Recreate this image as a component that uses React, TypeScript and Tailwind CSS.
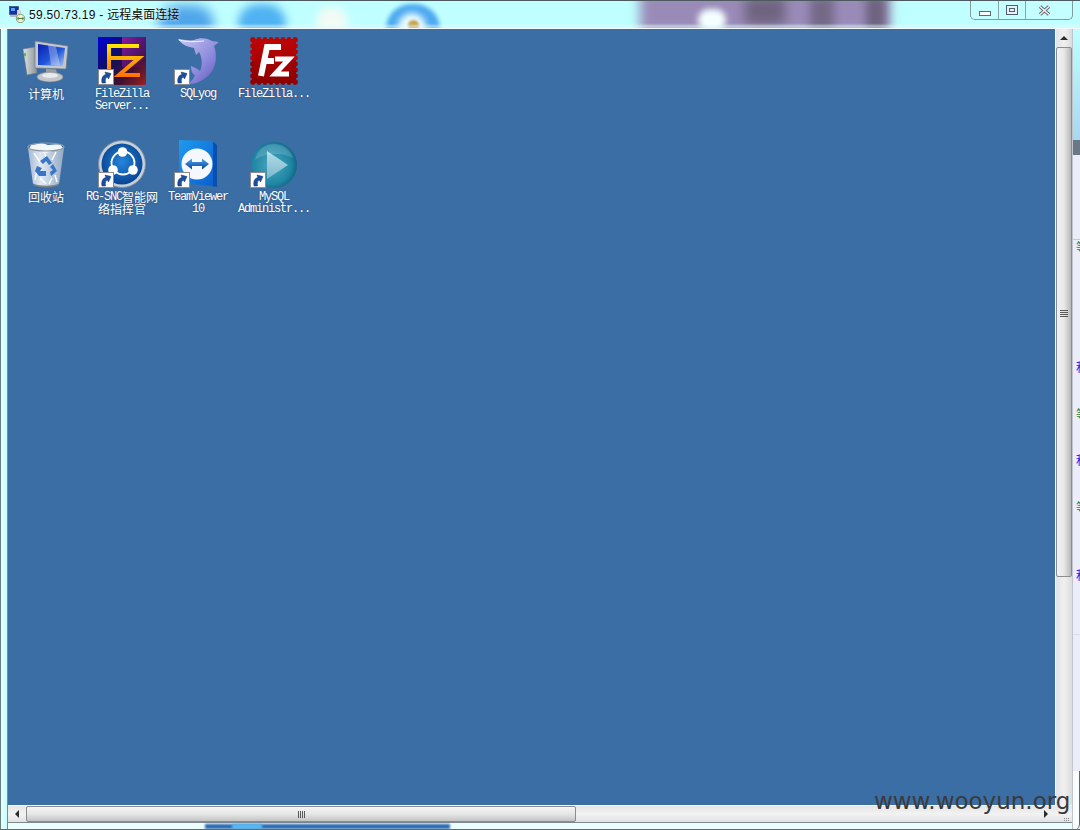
import React from "react";

const Shortcut = () => (
  <span className="absolute left-0 bottom-0 w-4 h-4 bg-white border border-[#8c8c8c] flex items-center justify-center">
    <svg width="14" height="14" viewBox="0 0 14 14">
      <path d="M3 13 C2 8 4 5 7 4.5 L6 2 L12 3.5 L9.5 9 L8.3 7 C6.5 7.5 6 10 6.5 13 Z" fill="#1d4f9e" stroke="#12306a" strokeWidth="0.5" />
    </svg>
  </span>
);

const ComputerIcon = () => (
  <svg width="48" height="48" viewBox="0 0 48 48">
    <defs>
      <linearGradient id="scr" x1="0" y1="0" x2="1" y2="1">
        <stop offset="0" stopColor="#0a1fb0" />
        <stop offset="0.55" stopColor="#1f55d8" />
        <stop offset="1" stopColor="#a9c6f5" />
      </linearGradient>
      <linearGradient id="twr" x1="0" y1="0" x2="1" y2="0">
        <stop offset="0" stopColor="#dfe3e5" />
        <stop offset="1" stopColor="#8b9296" />
      </linearGradient>
    </defs>
    <path d="M1 12 L13 10 L15 36 L5 38 Z" fill="url(#twr)" stroke="#70777c" strokeWidth="0.5" />
    <rect x="2" y="16" width="2" height="3" fill="#55c050" />
    <path d="M13 4 L46 9 L44 32 L13 31 Z" fill="#c4c9cf" stroke="#6d7880" strokeWidth="0.7" />
    <path d="M16 7 L43 11 L41 29 L16 28 Z" fill="url(#scr)" />
    <path d="M26 8 L34 9.5 L38 28.5 L29 28 Z" fill="#ffffff" opacity="0.3" />
    <path d="M24 32 L34 32.5 L35 36 L24 36 Z" fill="#9aa2a8" />
    <ellipse cx="28" cy="40" rx="13" ry="5" fill="#c3c7cb" stroke="#7b8186" strokeWidth="0.6" />
    <ellipse cx="28" cy="38.5" rx="8" ry="2.5" fill="#e8eaec" />
  </svg>
);

const FzServerIcon = () => (
  <svg width="48" height="48" viewBox="0 0 48 48">
    <defs>
      <linearGradient id="fzb" x1="0" y1="0" x2="1" y2="1">
        <stop offset="0" stopColor="#0000e0" />
        <stop offset="0.4" stopColor="#101060" />
        <stop offset="0.7" stopColor="#401030" />
        <stop offset="1" stopColor="#a02020" />
      </linearGradient>
      <linearGradient id="fzp" x1="0" y1="0" x2="1" y2="1">
        <stop offset="0" stopColor="#9a1a9a" stopOpacity="0.95" />
        <stop offset="1" stopColor="#8a1a9a" stopOpacity="0" />
      </linearGradient>
      <linearGradient id="fzs" gradientUnits="userSpaceOnUse" x1="24" y1="7" x2="24" y2="42">
        <stop offset="0" stopColor="#ffea00" />
        <stop offset="0.5" stopColor="#ffa000" />
        <stop offset="1" stopColor="#ff6a00" />
      </linearGradient>
    </defs>
    <rect width="48" height="48" fill="url(#fzb)" />
    <rect x="24" width="24" height="30" fill="url(#fzp)" />
    <path d="M11 38 V9 H41 M11 21 H24 M24 21 H41 L21 38 H42" fill="none" stroke="url(#fzs)" strokeWidth="4" />
  </svg>
);

const Dolphin = () => (
  <svg width="48" height="48" viewBox="0 0 48 48">
    <defs>
      <linearGradient id="dol" x1="0" y1="0" x2="1" y2="1">
        <stop offset="0" stopColor="#c8c8f2" />
        <stop offset="0.6" stopColor="#8c88dc" />
        <stop offset="1" stopColor="#5a58b4" />
      </linearGradient>
    </defs>
    <path d="M4 2 C12 3 16 4 20 3 C26 0 34 1 38 4 L45 5 L40 9 C44 20 42 35 30 42 C26 45 20 47 15 47 C18 43 20 41 21 38 C18 37 17 33 17 29 C20 30 24 32 26 34 C29 28 28 20 25 15 L22 18 L20 11 C14 10 8 8 4 2 Z" fill="url(#dol)" />
    <path d="M5 3 C12 5 20 5 30 4" stroke="#eeeefc" strokeWidth="1.2" fill="none" />
  </svg>
);

const FzRed = () => {
  const s = [3, 9, 15, 21, 27, 33, 39, 45];
  return (
    <svg width="48" height="48" viewBox="0 0 48 48">
      <defs>
        <linearGradient id="red" x1="0" y1="0" x2="0" y2="1">
          <stop offset="0" stopColor="#bf0606" />
          <stop offset="1" stopColor="#8c0000" />
        </linearGradient>
      </defs>
      <rect x="2" y="2" width="44" height="44" fill="url(#red)" />
      {s.map((v) => (
        <g key={v} fill={v > 24 ? "#960000" : "#b80404"}>
          <circle cx={v} cy="2.5" r="2.4" fill="#bb0505" />
          <circle cx={v} cy="45.5" r="2.4" fill="#8c0000" />
          <circle cx="2.5" cy={v} r="2.4" />
          <circle cx="45.5" cy={v} r="2.4" />
        </g>
      ))}
      <path d="M11 39 L17 10 H31 M14 24 H24" fill="none" stroke="#fff" strokeWidth="6" />
      <path d="M25 22 H39 L25 37 H39" fill="none" stroke="#fff" strokeWidth="5" />
    </svg>
  );
};

const Bin = () => (
  <svg width="48" height="48" viewBox="0 0 48 48">
    <defs>
      <linearGradient id="bin" x1="0" y1="0" x2="1" y2="0">
        <stop offset="0" stopColor="#a4b8cf" />
        <stop offset="0.35" stopColor="#dfe9f4" />
        <stop offset="1" stopColor="#93a9c3" />
      </linearGradient>
    </defs>
    <path d="M6 8 L42 8 L37 44 C30 47 18 47 11 44 Z" fill="url(#bin)" />
    <path d="M9 5 L20 3 L26 5 L38 4 L41 8 L24 13 L7 9 Z" fill="#f4f7fa" />
    <ellipse cx="24" cy="7" rx="18" ry="4" fill="none" stroke="#8f9aa6" strokeWidth="1.2" />
    <path d="M12 13 L18 22 M34 12 L30 20 M15 30 L13 40 M33 35 L35 42 M22 12 L24 17 M18 38 L24 44 M30 38 L27 44" stroke="#ffffff" strokeWidth="1.4" />
    <path d="M18 21 L25 16 L30 23 L27 25 L24 21 L21 24 Z M31 24 L35 31 L29 36 L28 32 L31 30 L28 27 Z M15 26 L20 28 L18 31 L24 31 L24 36 L17 36 L13 31 Z" fill="#3a76c8" />
    <path d="M11 43.5 C18 46.5 30 46.5 37 43.5 L36.5 45.5 C29 48 19 48 11.5 45.5 Z" fill="#7c8186" />
  </svg>
);

const Snc = () => (
  <svg width="48" height="48" viewBox="0 0 48 48">
    <defs>
      <radialGradient id="snc" cx="0.5" cy="0.45" r="0.6">
        <stop offset="0" stopColor="#2486dc" />
        <stop offset="1" stopColor="#063e8c" />
      </radialGradient>
    </defs>
    <circle cx="24" cy="24" r="23.5" fill="#c6d0da" stroke="#7d8ea0" strokeWidth="1" />
    <circle cx="24" cy="24" r="20.5" fill="url(#snc)" />
    <circle cx="25" cy="23" r="11.5" fill="none" stroke="#fff" strokeWidth="1.8" />
    <circle cx="24.5" cy="12" r="4.8" fill="#fff" />
    <circle cx="15" cy="30" r="4.8" fill="#fff" />
    <circle cx="35" cy="30" r="4.8" fill="#fff" />
  </svg>
);

const TeamViewer = () => (
  <svg width="48" height="48" viewBox="0 0 48 48">
    <defs>
      <linearGradient id="tv" x1="0" y1="0" x2="1" y2="1">
        <stop offset="0" stopColor="#1d9bf0" />
        <stop offset="1" stopColor="#0a5fd0" />
      </linearGradient>
      <linearGradient id="tva" x1="0" y1="0" x2="0" y2="1">
        <stop offset="0" stopColor="#4aa8ee" />
        <stop offset="1" stopColor="#0b3f9a" />
      </linearGradient>
    </defs>
    <path d="M38 1 L43 5 L43 47 L38 46 Z" fill="#0b4fae" />
    <path d="M5 0 L39 1 L39 46 L5 43 Z" fill="url(#tv)" />
    <circle cx="23" cy="24" r="15.5" fill="#f4f8fc" />
    <path d="M11 24 L18 18.5 V22 H28 V18.5 L35 24 L28 29.5 V26 H18 V29.5 Z" fill="url(#tva)" />
  </svg>
);

const MySqlAdmin = () => (
  <svg width="48" height="48" viewBox="0 0 48 48">
    <defs>
      <radialGradient id="my" cx="0.45" cy="0.5" r="0.6">
        <stop offset="0" stopColor="#4aa8c0" />
        <stop offset="0.7" stopColor="#1f86a4" />
        <stop offset="1" stopColor="#0c5a78" />
      </radialGradient>
      <linearGradient id="pl" x1="0" y1="0" x2="0" y2="1">
        <stop offset="0" stopColor="#b4dce8" />
        <stop offset="1" stopColor="#7cb8cc" />
      </linearGradient>
    </defs>
    <circle cx="24" cy="25" r="23" fill="url(#my)" />
    <path d="M17 11 L38 25 L17 39 Z" fill="url(#pl)" />
    <path d="M5 20 C7 10 15 4 24 4 C33 4 40 9 43 18 C32 12 15 13 5 20 Z" fill="#ffffff" opacity="0.16" />
  </svg>
);

const MONO = "font-['Liberation_Mono','Noto_Sans_CJK_SC',monospace]";

type Item = { icon: React.ReactNode; lines: React.ReactNode[]; shortcut?: boolean };

const Cjk = ({ children }: { children: React.ReactNode }) => (
  <span className="inline-block h-[12px] align-top text-[12px] leading-[12px] tracking-normal font-['Noto_Sans_CJK_SC',sans-serif]">{children}</span>
);

const items: Item[] = [
  { icon: <ComputerIcon />, lines: [<Cjk>计算机</Cjk>] },
  { icon: <FzServerIcon />, lines: ["FileZilla", "Server..."], shortcut: true },
  { icon: <Dolphin />, lines: ["SQLyog"], shortcut: true },
  { icon: <FzRed />, lines: ["FileZilla..."] },
  { icon: <Bin />, lines: [<Cjk>回收站</Cjk>] },
  { icon: <Snc />, lines: [<>RG-SNC<Cjk>智能网</Cjk></>, <Cjk>络指挥官</Cjk>], shortcut: true },
  { icon: <TeamViewer />, lines: ["TeamViewer", "10"], shortcut: true },
  { icon: <MySqlAdmin />, lines: ["MySQL", "Administr..."], shortcut: true },
];

const clip: { top: string; text: string; color: string }[] = [
  { top: "top-[212px]", text: "等", color: "text-[#1f8a3a]" },
  { top: "top-[332px]", text: "积", color: "text-[#2a1fe0]" },
  { top: "top-[379px]", text: "等", color: "text-[#1f8a3a]" },
  { top: "top-[425px]", text: "积", color: "text-[#2a1fe0]" },
  { top: "top-[472px]", text: "等", color: "text-[#1f8a3a]" },
  { top: "top-[540px]", text: "积", color: "text-[#2a1fe0]" },
];

export default function App() {
  return (
    <div className="relative w-[1080px] h-[830px] overflow-hidden bg-[#ecffff] flex flex-col font-['Liberation_Sans','Noto_Sans_CJK_SC',sans-serif]">
      {/* title bar */}
      <div className="relative h-[29px] shrink-0 border-t border-[#4c5a60] bg-[#bfffff] border-b border-b-[#f4f8f8] overflow-hidden flex items-start">
        <div className="absolute left-[158px] top-[4px] w-[56px] h-[40px] rounded-full bg-[#4fa6ea] blur-[6px]" />
        <div className="absolute left-[238px] top-[3px] w-[48px] h-[40px] rounded-full bg-[#4fb2f2] blur-[5px]" />
        <div className="absolute left-[316px] top-[6px] w-[32px] h-[30px] rounded-full bg-[#f2fbf4] blur-[4px]" />
        <div className="absolute left-[386px] top-[3px] w-[54px] h-[50px] rounded-full bg-[#4caaf0] blur-[2px]" />
        <div className="absolute left-[398px] top-[12px] w-[28px] h-[34px] rounded-full bg-[#e8fbff] blur-[3px]" />
        <div className="absolute left-[408px] top-[19px] w-[11px] h-[11px] rounded-full bg-[#c9a14a] blur-[1px]" />
        <div className="absolute left-[640px] top-[-12px] w-[250px] h-[46px] bg-[#9a8ab8] blur-[6px]" />
        <div className="absolute left-[745px] top-[-4px] w-[40px] h-[28px] bg-[#5c5468] opacity-70 blur-[6px]" />
        <div className="absolute left-[810px] top-[-4px] w-[24px] h-[36px] bg-[#5c5468] opacity-60 blur-[5px]" />
        <div className="absolute left-[866px] top-[-4px] w-[20px] h-[36px] bg-[#5c5468] opacity-70 blur-[4px]" />
        <div className="absolute left-[698px] top-[8px] w-[28px] h-[22px] rounded-full bg-[#f4ffff] blur-[3px]" />
        <div className="absolute left-0 right-0 bottom-0 h-[3px] bg-[#dffcff] opacity-60 blur-[1px]" />

        <div className="relative flex items-center h-[27px] pl-[9px] gap-[3px]">
          <svg width="17" height="17" viewBox="0 0 17 17">
            <rect x="0.5" y="0.5" width="9" height="8" fill="#1030b0" stroke="#404a70" strokeWidth="0.7" />
            <rect x="2" y="2" width="4" height="3" fill="#60a0f0" />
            <rect x="8" y="4" width="4" height="5" fill="#d0d4e0" />
            <rect x="1" y="9" width="7" height="2" fill="#b4b8c8" />
            <circle cx="11.5" cy="12.5" r="4.2" fill="#eef0dc" stroke="#6f8a50" strokeWidth="0.8" />
            <path d="M9 12.5 H14 M9.5 11 L8.5 12.5 L9.5 14 M13.5 11 L14.5 12.5 L13.5 14" stroke="#3a7a2a" strokeWidth="0.9" fill="none" />
          </svg>
          <span className="text-[12px] leading-[16px] text-[#0c0c0c] [text-shadow:0_0_4px_#ffffff]">
            <span className="tracking-[0.3px]">59.50.73.19 - </span>远程桌面连接
          </span>
        </div>

        {/* caption buttons */}
        <div className="absolute left-[970px] top-0 w-[103px] h-[19px] rounded-b-[5px] border border-t-0 border-[#7f9d9d] flex bg-[#c4ffff]">
          <div className="w-[28px] h-full border-r border-[#8aa3a3] flex items-center justify-center">
            <span className="block w-[12px] h-[5px] mt-[6px] bg-white border border-[#5a6a78]" />
          </div>
          <div className="w-[27px] h-full border-r border-[#8aa3a3] flex items-center justify-center">
            <span className="w-[12px] h-[10px] bg-[#e8f2f6] border border-[#4f5f70] flex items-center justify-center">
              <span className="block w-[6px] h-[4px] border border-[#4f5f70]" />
            </span>
          </div>
          <div className="flex-1 flex items-center justify-center pr-[10px]">
            <svg width="13" height="11" viewBox="0 0 13 11">
              <path d="M2 1.5 L11 9.5 M11 1.5 L2 9.5" stroke="#5c6670" strokeWidth="3.4" />
              <path d="M2 1.5 L11 9.5 M11 1.5 L2 9.5" stroke="#f0f2f4" strokeWidth="1.6" />
            </svg>
          </div>
        </div>
      </div>

      {/* middle */}
      <div className="flex flex-1 min-h-0">
        <div className="w-[7px] shrink-0 border-l border-[#6a8080] bg-gradient-to-r from-[#e8ffff] to-[#c8ffff]" />
        <div className="w-[1065px] shrink-0 flex flex-col border-l border-[#7d8a90]">
          <div className="flex h-[776px] shrink-0">
            {/* desktop */}
            <div className="w-[1047px] shrink-0 bg-[#3a6ea5] border-t border-[#3a6ea5] pt-[7px]">
              <div className="grid grid-cols-[repeat(4,76px)] auto-rows-[103px]">
                {items.map((it, i) => (
                  <div key={i} className="flex flex-col items-center">
                    <div className="relative w-12 h-12">
                      {it.icon}
                      {it.shortcut && <Shortcut />}
                    </div>
                    <div className={`mt-[3px] w-[76px] text-center text-white text-[12px] tracking-[-1.2px] leading-[12px] ${MONO} [text-shadow:0_0_2px_#2a4a70]`}>
                      {it.lines.map((l, k) => (
                        <div key={k} className="whitespace-nowrap h-[12px]">{l}</div>
                      ))}
                    </div>
                  </div>
                ))}
              </div>
            </div>
            {/* v scrollbar */}
            <div className="w-[17px] shrink-0 border-l border-[#f4f6f8] bg-gradient-to-r from-[#e4e4e4] via-[#f0f0f0] to-[#dcdcdc] flex flex-col">
              <div className="h-[18px] shrink-0 flex items-center justify-center">
                <span className="block w-0 h-0 border-x-[4px] border-x-transparent border-b-[4px] border-b-[#2a2a2a]" />
              </div>
              <div className="h-[530px] shrink-0 rounded-[2px] border border-[#8c8c8c] bg-gradient-to-r from-[#f2f2f2] via-[#e8e8e8] to-[#b8b8b8] flex items-center justify-center">
                <span className="flex flex-col gap-[1px] w-[8px] mt-[2px]">
                  <span className="h-[1px] bg-[#5a5a5a]" />
                  <span className="h-[1px] bg-[#5a5a5a]" />
                  <span className="h-[1px] bg-[#5a5a5a]" />
                  <span className="h-[1px] bg-[#5a5a5a]" />
                </span>
              </div>
            </div>
          </div>
          {/* h scrollbar */}
          <div className="relative h-[18px] shrink-0 flex border-t border-[#f4f6f8] border-b border-b-[#7d8a90] bg-gradient-to-b from-[#e6e6e6] via-[#f2f2f2] to-[#e2e2e2]">
            <div className="w-[18px] shrink-0 flex items-center justify-center">
              <span className="block w-0 h-0 border-y-[4px] border-y-transparent border-r-[4px] border-r-[#2a2a2a]" />
            </div>
            <div className="w-[550px] shrink-0 rounded-[2px] border border-[#8c8c8c] bg-gradient-to-b from-[#f4f4f4] via-[#e6e6e6] to-[#c4c4c4] flex items-center justify-center">
              <span className="flex gap-[1px] h-[7px]">
                <span className="w-[1px] bg-[#5a5a5a]" />
                <span className="w-[1px] bg-[#5a5a5a]" />
                <span className="w-[1px] bg-[#5a5a5a]" />
                <span className="w-[1px] bg-[#5a5a5a]" />
              </span>
            </div>
            <div className="flex-1" />
            <div className="w-[17px] shrink-0 flex items-center justify-center mr-[18px]">
              <span className="block w-0 h-0 border-y-[4px] border-y-transparent border-l-[4px] border-l-[#2a2a2a]" />
            </div>
            <div className="absolute right-[3px] bottom-[1px] grid grid-cols-3 gap-[1px]">
              {[0, 1, 2, 3, 4, 5].map((n) => (
                <span key={n} className="block w-[1px] h-[1px] bg-[#8a8a8a]" />
              ))}
            </div>
          </div>
          {/* bottom frame */}
          <div className="relative flex-1" />
        </div>
        <div className="relative flex-1 overflow-hidden border-l border-[#c0c4cc] bg-[#ecedfa]">
          <div className="absolute inset-x-0 top-0 h-[111px] bg-gradient-to-b from-[#bfffff] to-[#a8d8f0]" />
          <div className="absolute inset-x-0 top-[111px] h-[15px] bg-[#6a7888]" />
          <div className="absolute inset-x-0 top-[210px] h-px bg-[#c8c8d4]" />
          <div className="absolute inset-x-0 top-[605px] h-px bg-[#dcdcea]" />
          {clip.map((c) => (
            <span key={c.top} className={`absolute left-[3px] ${c.top} ${c.color} text-[12px] leading-[12px] font-['Noto_Sans_CJK_SC',sans-serif]`}>{c.text}</span>
          ))}
          <div className="absolute inset-x-0 top-[742px] bottom-0 bg-[#fbfdfd] border-r border-[#5c6a70] rounded-br-[6px]" />
        </div>
      </div>

      {/* blurred backdrop under the frame and watermark */}
      <div className="absolute left-[205px] top-[824px] w-[245px] h-[5px] bg-[#2f6ab0] blur-[1px]" />
      <div className="absolute left-[232px] top-[824px] w-[30px] h-[5px] bg-[#58b8f8] blur-[1px]" />
      <div className="absolute left-0 right-0 bottom-0 h-px bg-[#5c6a70]" />
      <div className="absolute left-[874px] top-[785px] text-[23px] leading-[32px] text-[#3a3a3a] font-['DejaVu_Sans',sans-serif] whitespace-nowrap">www.wooyun.org</div>
    </div>
  );
}
